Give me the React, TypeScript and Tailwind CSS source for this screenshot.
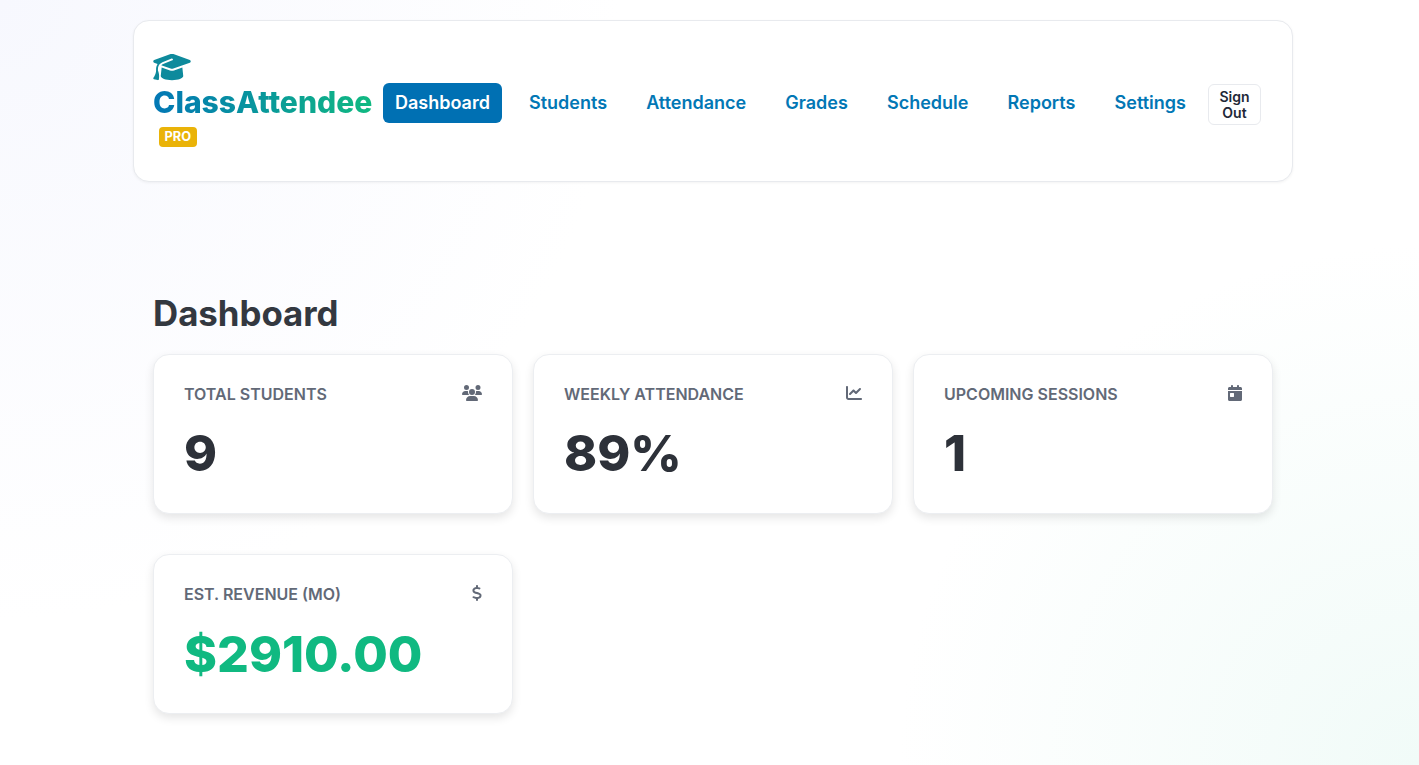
import React from 'react';
import { FaCalendarDay, FaChartLine, FaDollarSign, FaGraduationCap, FaUsers } from 'react-icons/fa6';

const NAV_ITEMS = ['Dashboard', 'Students', 'Attendance', 'Grades', 'Schedule', 'Reports', 'Settings'];

function StatCard({ label, value, icon, valueClass }: { label: string; value: string; icon: React.ReactNode; valueClass: string }) {
  return (
    <div className="h-[160.2px] bg-white border border-[#eceef1] rounded-2xl pl-[30px] pr-[30px] pt-[28px] shadow-[0_4px_10px_rgba(0,0,0,0.1)]">
      <div className="flex justify-between items-start h-[22px]">
        <span className="text-[16px] leading-[22px] font-semibold text-[#626977] uppercase">{label}</span>
        <span className="text-[#626977] pt-[2px]">{icon}</span>
      </div>
      <div className={`mt-[12.4px] text-[50px] leading-[72px] font-extrabold ${valueClass}`}>{value}</div>
    </div>
  );
}

export default function App() {
  return (
    <div className="min-h-[765px] font-['Inter',sans-serif] bg-[radial-gradient(circle_at_100%_100%,#f1fbf8,transparent_520px),radial-gradient(circle_at_0_0,#f7f8fe,#ffffff_620px)]">
      <div className="w-[1160px] ml-[133px] pt-5">
        <header className="h-[162.4px] bg-white border border-[#e8eaee] rounded-2xl shadow-[0_1px_3px_rgba(0,0,0,0.05)] flex items-center pl-[19px]">
          <div className="flex flex-col items-start w-[230px] mb-[3px]">
            <FaGraduationCap className="text-[#0e8a9c] w-[38px] h-[30px]" />
            <span className="text-[30.1px] leading-[40px] font-extrabold bg-[linear-gradient(90deg,#0277b5,#10b981)] bg-clip-text text-transparent">
              ClassAttendee
            </span>
            <span className="ml-[6px] mt-[5px] px-[5.5px] h-[20px] leading-[20px] rounded bg-[#eab308] text-white text-[12.8px] font-bold">PRO</span>
          </div>
          <nav className="flex items-center mt-[4px]">
            {NAV_ITEMS.map((item) => (
              <a
                key={item}
                className={
                  item === 'Dashboard'
                    ? 'h-[40px] px-3 mr-[15.1px] leading-[40px] rounded-md bg-[#0070b3] text-white text-[18px] font-semibold'
                    : 'h-[40px] px-3 mr-[15.1px] leading-[40px] rounded-md text-[#0277b5] text-[18px] font-semibold'
                }
              >
                {item}
              </a>
            ))}
          </nav>
          <button className="-ml-[5px] mt-[7px] w-[53px] h-[41px] bg-white border border-[#e8eaee] rounded-md text-[#1f2937] text-[14px] leading-[16px] font-semibold">
            Sign Out
          </button>
        </header>
        <main className="px-5 pt-[108.6px]">
          <h1 className="text-[34.8px] leading-[44px] font-bold text-[#333840] mb-[19px]">Dashboard</h1>
          <div className="grid grid-cols-3 gap-x-5 gap-y-10">
            <StatCard label="Total Students" value="9" icon={<FaUsers className="w-[20px] h-[16px]" />} valueClass="text-[#2d3139]" />
            <StatCard label="Weekly Attendance" value="89%" icon={<FaChartLine className="w-[16px] h-[16px]" />} valueClass="text-[#2d3139]" />
            <StatCard label="Upcoming Sessions" value="1" icon={<FaCalendarDay className="w-[14px] h-[16px]" />} valueClass="text-[#2d3139]" />
            <StatCard label="Est. Revenue (Mo)" value="$2910.00" icon={<FaDollarSign className="w-[10px] h-[16px]" />} valueClass="text-[#10b981]" />
          </div>
        </main>
      </div>
    </div>
  );
}
